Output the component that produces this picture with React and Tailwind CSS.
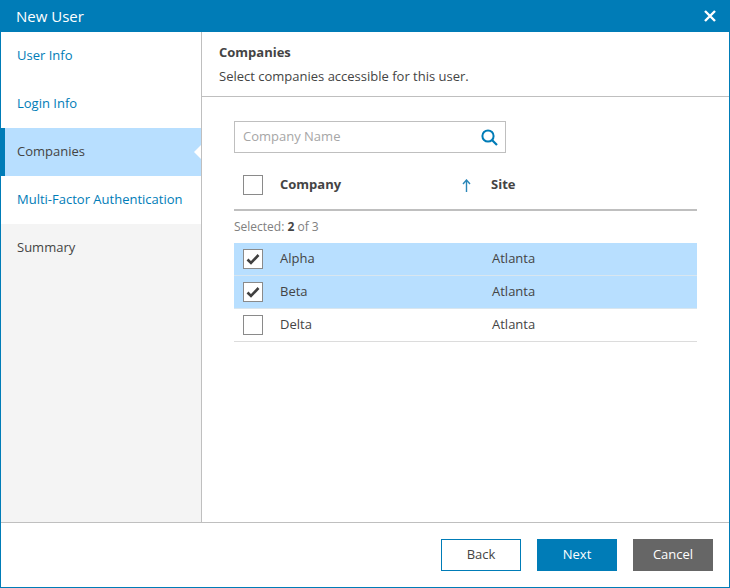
import React from "react";

const font = { fontFamily: '"Open Sans", "Noto Sans", sans-serif' };

function Box({ checked }) {
  return (
    <span className="flex h-5 w-5 shrink-0 items-center justify-center border border-[#8a8a8a] bg-white">
      {checked && (
        <svg width="14" height="12" viewBox="0 0 14 12">
          <path d="M1.5 6.5 L5 10 L12.5 2" fill="none" stroke="#404040" strokeWidth="2.6" />
        </svg>
      )}
    </span>
  );
}

function Row({ name, checked }) {
  return (
    <div className={`flex h-[33px] items-center border-b pl-[9px] text-[13px] text-[#444] ${checked ? "border-[#d9e6ef] bg-[#b8dfff]" : "border-[#dcdcdc] bg-white"}`}>
      <Box checked={checked} />
      <span className="ml-[17px] w-[212px]">{name}</span>
      <span>Atlanta</span>
    </div>
  );
}

export default function App() {
  return (
    <div style={font} className="flex h-[588px] w-[730px] flex-col overflow-hidden border-x border-b border-[#007cb7] bg-white">
      <div className="-mx-px flex h-8 shrink-0 items-center justify-between bg-[#007cb7] pl-4 pr-[13px] text-[15px] text-white">
        <span>New User</span>
        <svg width="14" height="14" viewBox="0 0 14 14">
          <path d="M2 2 L12 12 M12 2 L2 12" stroke="#fff" strokeWidth="2.4" />
        </svg>
      </div>
      <div className="flex min-h-0 flex-1">
        <nav className="flex w-[201px] shrink-0 flex-col border-r border-[#bfbfbf] bg-[#f4f4f4] text-[13px]">
          <div className="flex h-12 items-center bg-white pl-4 text-[#007cb7]">User Info</div>
          <div className="flex h-12 items-center bg-white pl-4 text-[#007cb7]">Login Info</div>
          <div className="relative flex h-12 items-center border-l-4 border-[#007cb7] bg-[#b8dfff] pl-3 text-[#444]">
            Companies
            <span className="absolute right-0 top-[17px] h-0 w-0 border-y-[7px] border-r-[7px] border-y-transparent border-r-white" />
          </div>
          <div className="flex h-12 items-center bg-white pl-4 text-[#007cb7]">Multi-Factor Authentication</div>
          <div className="flex h-12 items-center pl-4 text-[#444]">Summary</div>
        </nav>
        <main className="min-w-0 flex-1">
          <div className="h-[65px] border-b border-[#bfbfbf] pl-[17px] pt-[11px] text-[13px] text-[#444]">
            <div className="font-bold leading-[18px]">Companies</div>
            <div className="mt-[6px] leading-[18px]">Select companies accessible for this user.</div>
          </div>
          <div className="pl-8 pr-8 pt-6">
            <div className="flex h-8 w-[272px] items-center justify-between border border-[#bfbfbf] pl-2 pr-[7px] text-[13px] text-[#a6a6a6]">
              <span>Company Name</span>
              <svg width="17" height="17" viewBox="0 0 17 17">
                <circle cx="7" cy="7" r="5.6" fill="none" stroke="#007cb7" strokeWidth="2" />
                <path d="M11 11 L16 16" stroke="#007cb7" strokeWidth="2.2" />
              </svg>
            </div>
            <div className="mt-[22px] flex h-5 w-[463px] items-center pl-[9px] text-[13px] font-bold text-[#444]">
              <Box />
              <span className="ml-[17px] w-[182px]">Company</span>
              <svg width="9" height="13" viewBox="0 0 9 13" className="mr-[20px]">
                <path d="M4.5 1 V13 M1 5 L4.5 1 L8 5" fill="none" stroke="#2a86b8" strokeWidth="1.4" />
              </svg>
              <span>Site</span>
            </div>
            <div className="mt-[14px] h-[2px] w-[463px] bg-[#bfbfbf]" />
            <div className="flex h-[32px] w-[463px] items-center text-xs text-[#808080]">
              <span>Selected:&nbsp;<b className="text-[#444]">2</b> of 3</span>
            </div>
            <div className="w-[463px]">
              <Row name="Alpha" checked />
              <Row name="Beta" checked />
              <Row name="Delta" />
            </div>
          </div>
        </main>
      </div>
      <div className="flex h-[65px] shrink-0 items-start justify-end gap-4 border-t border-[#bfbfbf] pr-4 pt-4 text-[13px]">
        <button className="h-8 w-20 border border-[#007cb7] bg-white text-[#444]">Back</button>
        <button className="h-8 w-20 bg-[#007cb7] text-white">Next</button>
        <button className="h-8 w-20 bg-[#666] text-white">Cancel</button>
      </div>
    </div>
  );
}
